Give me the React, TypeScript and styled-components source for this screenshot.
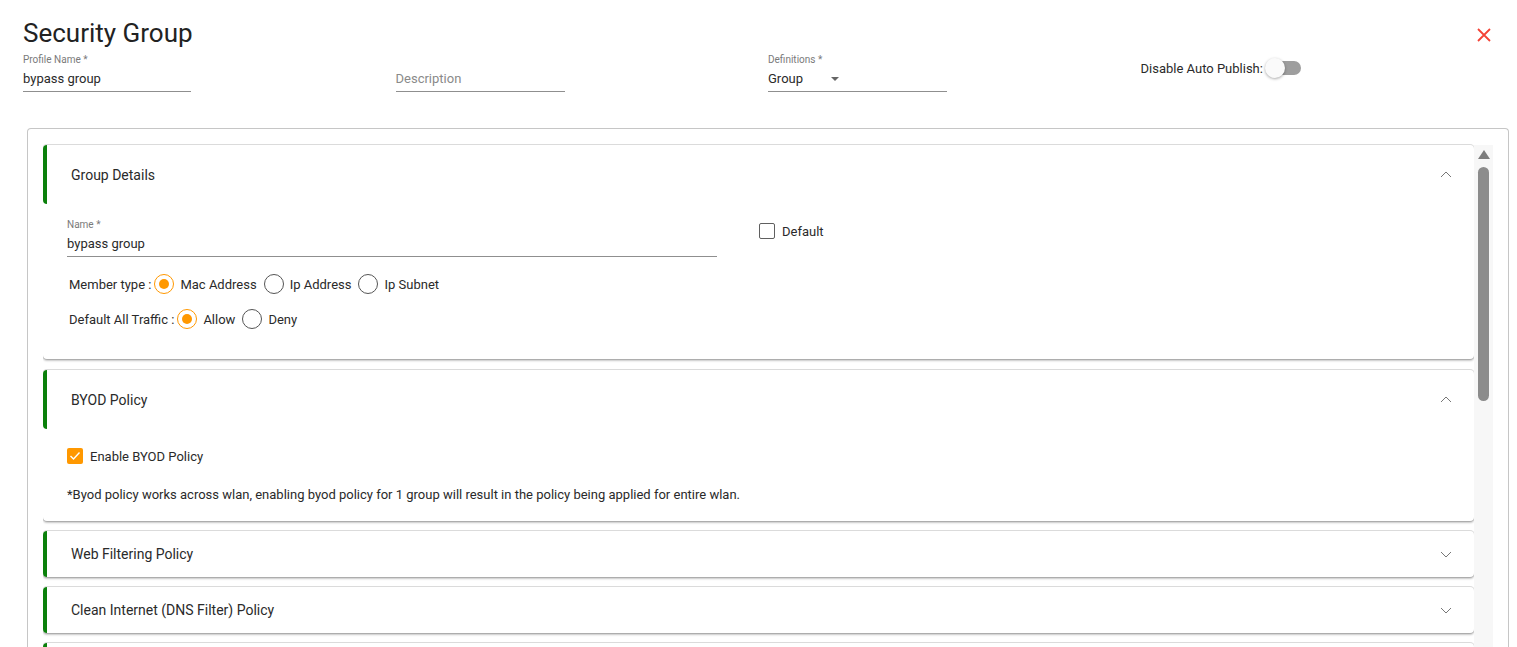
import React from "react";
import styled, {createGlobalStyle} from "styled-components";

const GlobalStyle = createGlobalStyle`
  html, body {
    margin: 0;
    padding: 0;
    overflow: hidden;
    background: #fff;
    font-family: Roboto, "Liberation Sans", Arial, sans-serif;
    color: #2a2a2a;
  }
  * { box-sizing: border-box; }
`;

const ORANGE = "#ff9800";
const GREEN = "#0b800b";
const TEXT = "#2a2a2a";

const Page = styled.div`
  height: 647px;
  padding: 15px 8px 0 23px;
  display: flex;
  flex-direction: column;
`;

const TitleRow = styled.div`
  display: flex;
  justify-content: space-between;
  align-items: flex-start;
  padding-right: 18px;
`;

const Title = styled.h1`
  margin: 0 0 3px;
  font-size: 26px;
  line-height: 36px;
  font-weight: 400;
  color: #222;
`;

const CloseButton = styled.button`
  border: 0;
  background: none;
  padding: 0;
  margin-top: 13px;
  width: 14px;
  height: 14px;
  cursor: pointer;
  display: flex;
`;

const FieldRow = styled.div`
  display: grid;
  grid-template-columns: repeat(4, 372.5px);
  align-items: start;
`;

const Field = styled.div<{ $width: number }>`
  width: ${p => p.$width}px;
  display: flex;
  flex-direction: column;
`;

const Label = styled.label`
  font-size: 10px;
  line-height: 12px;
  color: #7a7a7a;
  height: 12px;
`;

const Input = styled.div<{ $placeholder?: boolean }>`
  margin-top: 3px;
  font-size: 13px;
  line-height: 20px;
  padding-bottom: 2px;
  border-bottom: 1px solid #8f8f8f;
  color: ${p => (p.$placeholder ? "#8a8a8a" : TEXT)};
  display: flex;
  align-items: center;
`;

const Caret = styled.span`
  margin-left: 28px;
  width: 0;
  height: 0;
  border-left: 4px solid transparent;
  border-right: 4px solid transparent;
  border-top: 4px solid #666;
`;

const PublishRow = styled.div`
  margin-top: 3px;
  height: 22px;
  display: flex;
  align-items: center;
  font-size: 13px;
  color: ${TEXT};
`;

const Switch = styled.span`
  position: relative;
  margin-left: 2px;
  width: 36px;
  height: 22px;
  display: inline-flex;
  align-items: center;
`;

const SwitchTrack = styled.span`
  margin-left: 2px;
  width: 34px;
  height: 14px;
  border-radius: 7px;
  background: #9e9e9e;
`;

const SwitchThumb = styled.span`
  position: absolute;
  left: 0;
  top: 1px;
  width: 20px;
  height: 20px;
  border-radius: 50%;
  background: #fafafa;
  box-shadow: 0 1px 3px rgba(0, 0, 0, 0.35);
`;

const Frame = styled.div`
  margin: 36px 0 0 4px;
  flex: 1;
  border: 1px solid #c6c6c6;
  border-bottom: 0;
  border-radius: 4px 4px 0 0;
  padding: 15px 15px 0 15px;
  display: flex;
  min-height: 0;
`;

const PanelList = styled.div`
  width: 1431px;
  display: flex;
  flex-direction: column;
  gap: 10px;
  overflow: hidden;
  padding-top: 1px;
`;

const ScrollBar = styled.div`
  margin-top: 1px;
  width: 19px;
  background: #f7f7f7;
  display: flex;
  flex-direction: column;
  align-items: center;
  padding-top: 5px;
`;

const ScrollArrow = styled.span`
  width: 0;
  height: 0;
  border-left: 6px solid transparent;
  border-right: 6px solid transparent;
  border-bottom: 9px solid #7d7d7d;
`;

const ScrollThumb = styled.span`
  margin-top: 8px;
  width: 11px;
  height: 234px;
  border-radius: 6px;
  background: #8c8c8c;
`;

const Panel = styled.section<{ $spaced?: boolean }>`
  margin-top: ${p => (p.$spaced ? 1 : 0)}px;
  background: #fff;
  border-radius: 4px;
  box-shadow: 0 0 0 1px rgba(0, 0, 0, 0.14), 0 2px 2px rgba(0, 0, 0, 0.22);
  flex-shrink: 0;
`;

const PanelHeader = styled.div<{ $open: boolean }>`
  height: ${p => (p.$open ? 59 : 46)}px;
  border-left: 4px solid ${GREEN};
  border-radius: 4px 0 0 4px;
  padding: 0 22px 0 24px;
  display: flex;
  align-items: center;
  justify-content: space-between;
  font-size: 14px;
  color: ${TEXT};
`;

const PanelBody = styled.div<{ $bottom: number }>`
  padding: 0 24px ${p => p.$bottom}px;
`;

const DetailsGrid = styled.div`
  padding-top: 15px;
  display: flex;
  align-items: flex-start;
`;

const DefaultCheck = styled.div`
  margin: 4px 0 0 42px;
  display: flex;
  align-items: center;
  gap: 7px;
  font-size: 13px;
`;

const Box = styled.span<{ $checked?: boolean }>`
  width: 16px;
  height: 16px;
  border-radius: 2px;
  border: ${p => (p.$checked ? "none" : "1.5px solid #5f5f5f")};
  background: ${p => (p.$checked ? ORANGE : "#fff")};
  display: inline-flex;
  align-items: center;
  justify-content: center;
`;

const RadioRow = styled.div<{ $first?: boolean }>`
  margin-top: ${p => (p.$first ? 15 : 11)}px;
  padding-left: 2px;
  height: 24px;
  display: flex;
  align-items: center;
  font-size: 13px;
  color: ${TEXT};
`;

const RadioLabel = styled.span`
  margin: 0 7px 0 6px;
`;

const Radio = styled.span<{ $checked?: boolean }>`
  width: 20px;
  height: 20px;
  border-radius: 50%;
  border: 1.2px solid ${p => (p.$checked ? ORANGE : "#555")};
  display: inline-flex;
  align-items: center;
  justify-content: center;
  margin-left: ${p => (p.$checked ? 3 : 0)}px;
  &::after {
    content: "";
    width: 10px;
    height: 10px;
    border-radius: 50%;
    background: ${p => (p.$checked ? ORANGE : "transparent")};
  }
`;

const ByodCheck = styled.div`
  margin-top: 16px;
  height: 22px;
  display: flex;
  align-items: center;
  gap: 7px;
  font-size: 13px;
`;

const Note = styled.p`
  margin: 18px 0 0;
  font-size: 13px;
  line-height: 20px;
  color: ${TEXT};
`;

const Chevron: React.FC<{ up?: boolean }> = ({up}) => (
  <svg width="12" height="7" viewBox="0 0 12 7">
    <polyline
      points={up ? "1,6 6,1 11,6" : "1,1 6,6 11,1"}
      fill="none"
      stroke="#777"
      strokeWidth="1"
    />
  </svg>
);

const CheckMark = () => (
  <svg width="12" height="10" viewBox="0 0 12 10">
    <polyline points="1.5,5 4.5,8 10.5,1.5" fill="none" stroke="#fff" strokeWidth="1.4"/>
  </svg>
);

type RadioOption = { label: string; checked?: boolean };

const RadioGroup: React.FC<{ title: string; options: RadioOption[]; first?: boolean }> = (props) => {
  const {title, options, first} = props;
  return (
    <RadioRow $first={first}>
      <span>{title}</span>
      {options.map(o => (
        <React.Fragment key={o.label}>
          <Radio $checked={o.checked}/>
          <RadioLabel>{o.label}</RadioLabel>
        </React.Fragment>
      ))}
    </RadioRow>
  );
};

type PanelProps = {
  title: string;
  open?: boolean;
  bottom?: number;
  spaced?: boolean;
  children?: React.ReactNode;
};

const AccordionPanel: React.FC<PanelProps> = (props) => {
  const {title, open = false, bottom = 0, spaced, children} = props;
  return (
    <Panel $spaced={spaced}>
      <PanelHeader $open={open}>
        <span>{title}</span>
        <Chevron up={open}/>
      </PanelHeader>
      {open && <PanelBody $bottom={bottom}>{children}</PanelBody>}
    </Panel>
  );
};

export default function App() {
  return (
    <>
      <GlobalStyle/>
      <Page>
        <TitleRow>
          <Title>Security Group</Title>
          <CloseButton aria-label="close">
            <svg width="14" height="14" viewBox="0 0 14 14">
              <path d="M1 1 L13 13 M13 1 L1 13" stroke="#f44336" strokeWidth="1.8"/>
            </svg>
          </CloseButton>
        </TitleRow>

        <FieldRow>
          <Field $width={168}>
            <Label>Profile Name *</Label>
            <Input>bypass group</Input>
          </Field>
          <Field $width={169}>
            <Label/>
            <Input $placeholder>Description</Input>
          </Field>
          <Field $width={179}>
            <Label>Definitions *</Label>
            <Input>Group<Caret/></Input>
          </Field>
          <PublishRow>
            Disable Auto Publish:
            <Switch>
              <SwitchTrack/>
              <SwitchThumb/>
            </Switch>
          </PublishRow>
        </FieldRow>

        <Frame>
          <PanelList>
            <AccordionPanel title="Group Details" open bottom={28}>
              <DetailsGrid>
                <Field $width={650}>
                  <Label>Name *</Label>
                  <Input>bypass group</Input>
                </Field>
                <DefaultCheck>
                  <Box/>
                  Default
                </DefaultCheck>
              </DetailsGrid>
              <RadioGroup
                first
                title="Member type :"
                options={[
                  {label: "Mac Address", checked: true},
                  {label: "Ip Address"},
                  {label: "Ip Subnet"},
                ]}
              />
              <RadioGroup
                title="Default All Traffic :"
                options={[{label: "Allow", checked: true}, {label: "Deny"}]}
              />
            </AccordionPanel>

            <AccordionPanel title="BYOD Policy" open bottom={16} spaced>
              <ByodCheck>
                <Box $checked><CheckMark/></Box>
                Enable BYOD Policy
              </ByodCheck>
              <Note>
                *Byod policy works across wlan, enabling byod policy for 1 group will result in the policy being applied for entire wlan.
              </Note>
            </AccordionPanel>

            <AccordionPanel title="Web Filtering Policy"/>
            <AccordionPanel title="Clean Internet (DNS Filter) Policy"/>
            <AccordionPanel title=""/>
          </PanelList>
          <ScrollBar>
            <ScrollArrow/>
            <ScrollThumb/>
          </ScrollBar>
        </Frame>
      </Page>
    </>
  );
}
